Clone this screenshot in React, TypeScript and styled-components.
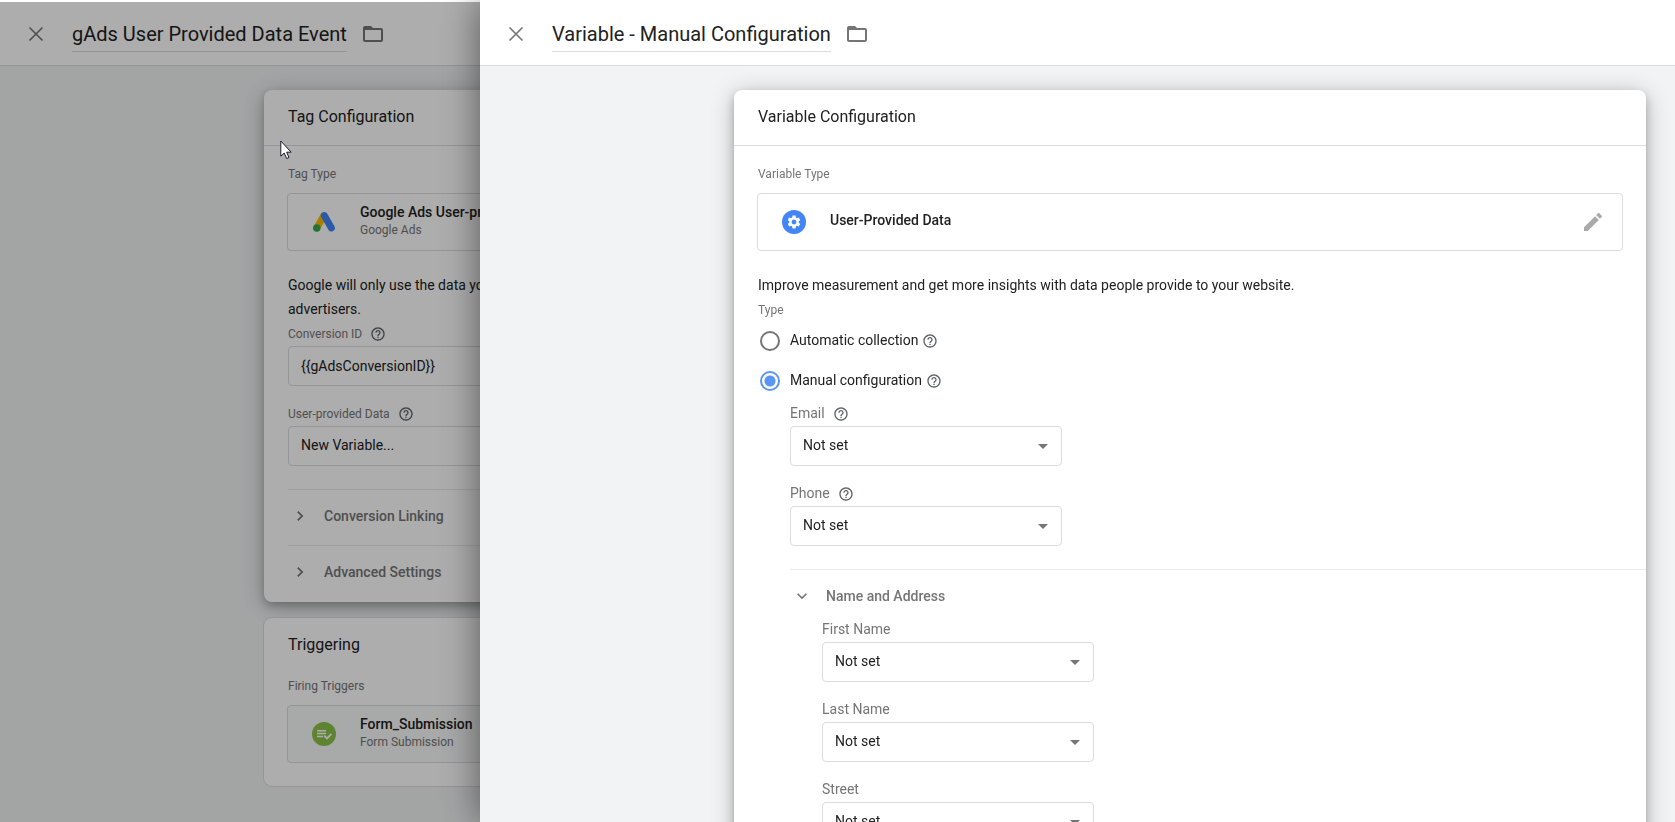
import React, { useId, useState } from 'react';
import styled, { createGlobalStyle } from 'styled-components';
import {
  MdArrowDropDown,
  MdChevronRight,
  MdEdit,
  MdExpandMore,
  MdHelpOutline,
  MdSettings,
} from 'react-icons/md';

const GlobalStyle = createGlobalStyle`
  * { box-sizing: border-box; }
  body {
    margin: 0;
    background: #fff;
    color: #212121;
    font-family: Roboto, "Liberation Sans", sans-serif;
    font-size: 14px;
    line-height: 24px;
  }
  h1, h2, h3, p { margin: 0; }
  button, input, select { font: inherit; color: inherit; }
  svg { display: block; flex: none; }
`;

const Screen = styled.div`
  height: 100vh;
  padding-top: 2px;
  overflow: hidden;
`;

const Sheet = styled.section`
  height: 100%;
  background: #f1f3f4;
  overflow: hidden;
`;

const Scrim = styled.div`
  position: fixed;
  inset: 2px 0 0;
  background: rgba(0, 0, 0, 0.32);
`;

const Drawer = styled(Sheet)`
  position: fixed;
  inset: 0 0 0 480px;
  height: auto;
  padding-top: 2px;
  background: linear-gradient(#fff 2px, #f1f3f4 2px);
  box-shadow: 0 0 36px rgba(0, 0, 0, 0.5);
`;

const SheetHeader = styled.header`
  display: flex;
  align-items: center;
  height: 64px;
  padding: 0 24px;
  background: #fff;
  border-bottom: 1px solid #dadce0;
`;

const SheetTitle = styled.h1`
  margin: 5px 14px 0 24px;
  padding-bottom: 3px;
  border-bottom: 1px solid #dadce0;
  font-size: 20px;
  font-weight: 400;
  line-height: 28px;
  white-space: nowrap;
`;

const IconButton = styled.button`
  display: flex;
  padding: 0;
  border: 0;
  background: none;
  color: #757575;
  cursor: pointer;
`;

const TagBody = styled.main`
  display: flex;
  flex-direction: column;
  gap: 16px;
  padding: 24px 264px;
`;

const VariableBody = styled.main`
  padding: 24px 29px 24px 254px;
`;

const Card = styled.section<{ $raised?: boolean }>`
  background: #fff;
  border-radius: 8px;
  box-shadow: ${(p) =>
    p.$raised
      ? '0 4px 8px rgba(0, 0, 0, 0.22), 0 4px 24px rgba(0, 0, 0, 0.24)'
      : '0 0 0 1px #dadce0'};
`;

const CardHeader = styled.header<{ $ruled?: boolean }>`
  height: ${(p) => (p.$ruled ? 56 : 52)}px;
  padding: 15px 24px 0;
  border-bottom: ${(p) => (p.$ruled ? '1px solid #dadce0' : '0')};
`;

const CardTitle = styled.h2`
  font-size: 16px;
  font-weight: 400;
  line-height: 24px;
`;

const CardContent = styled.div<{ $top: number; $bottom: number }>`
  padding: ${(p) => p.$top}px 24px ${(p) => p.$bottom}px;
`;

const Caption = styled.h3`
  height: 24px;
  padding-top: 1px;
  color: #757575;
  font-size: 12px;
  font-weight: 400;
  line-height: 24px;
`;

const TypeBox = styled.button<{ $shaded?: boolean }>`
  display: flex;
  align-items: center;
  gap: 24px;
  width: calc(100% + 2px);
  height: 58px;
  margin: 8px -1px 0;
  padding: 0 17px 0 24px;
  border: 1px solid #dadce0;
  border-radius: 4px;
  background: ${(p) => (p.$shaded ? '#f8f9fa' : '#fff')};
  text-align: left;
  cursor: pointer;
`;

const TypeText = styled.span`
  display: flex;
  flex: 1;
  flex-direction: column;
  padding-bottom: 2px;
`;

const TypeName = styled.span`
  font-weight: 500;
  line-height: 18px;

  &:only-child {
    padding-bottom: 2px;
  }
`;

const TypeSource = styled.span`
  color: #757575;
  font-size: 12px;
  line-height: 18px;
`;

const Description = styled.p`
  margin-top: 22px;
`;

const FieldBlock = styled.div`
  & + & { margin-top: 15px; }
`;

const FieldLabel = styled.div<{ $large?: boolean }>`
  display: flex;
  align-items: center;
  gap: 8px;
  height: 25px;
  color: #757575;
  font-size: ${(p) => (p.$large ? 14 : 12)}px;
  line-height: ${(p) => (p.$large ? 20 : 24)}px;

  & > label {
    padding-bottom: ${(p) => (p.$large ? 2 : 0)}px;
  }
`;

const HelpButton = styled(IconButton)`
  color: #5f6368;
`;

const TextInput = styled.input`
  display: block;
  width: 100%;
  height: 40px;
  padding: 0 12px;
  border: 1px solid #dadce0;
  border-radius: 4px;
  background: #fff;
`;

const SelectFrame = styled.div<{ $fluid?: boolean }>`
  display: grid;
  grid-template-columns: 1fr auto;
  align-items: center;
  width: ${(p) => (p.$fluid ? '100%' : '272px')};

  & > select {
    grid-area: 1 / 1 / 2 / 3;
    width: 100%;
    height: 40px;
    padding: 0 12px 2px;
    border: 1px solid #dadce0;
    border-radius: 4px;
    background: #fff;
    appearance: none;
  }

  & > svg {
    grid-area: 1 / 2;
    margin-right: 7px;
    color: #757575;
    pointer-events: none;
  }
`;

const ExpanderRow = styled.button<{ $height: number }>`
  display: flex;
  align-items: flex-start;
  gap: 14px;
  width: 100%;
  height: ${(p) => p.$height}px;
  padding: 16px 0 0 2px;
  border: 0;
  border-top: 1px solid #e8eaed;
  background: none;
  color: #757575;
  font-weight: 500;
  line-height: 20px;
  text-align: left;
  cursor: pointer;
`;

const ExpanderList = styled.div`
  margin-top: 23px;
`;

const RadioRow = styled.div`
  display: flex;
  align-items: center;
  height: 40px;
  padding-left: 2px;
`;

const RadioInput = styled.input`
  width: 20px;
  height: 20px;
  margin: 0;
  border: 2px solid #757575;
  border-radius: 50%;
  appearance: none;

  &:checked {
    border-color: #5a95f5;
    background: radial-gradient(circle, #5a95f5 5px, transparent 6px);
  }
`;

const RadioLabel = styled.label`
  margin: 0 4px 0 10px;
  padding-bottom: 2px;
  line-height: 22px;
`;

const Nested = styled.div`
  padding-left: 32px;
`;

const AddressSection = styled.div`
  margin: 23px -24px 0 0;
`;

const Pointer = styled.svg`
  position: fixed;
  top: 140px;
  left: 280px;
`;

function CloseIcon() {
  return (
    <svg width="24" height="24" viewBox="0 0 24 24" fill="none" stroke="currentColor" strokeWidth="1.6">
      <path d="M5.5 5.5l13 13M18.5 5.5l-13 13" />
    </svg>
  );
}

function FolderIcon() {
  return (
    <svg width="24" height="24" viewBox="0 0 24 24" fill="currentColor">
      <path d="M20 6h-8l-2-2H4c-1.1 0-1.99.9-1.99 2L2 18c0 1.1.9 2 2 2h16c1.1 0 2-.9 2-2V8c0-1.1-.9-2-2-2zm0 12H4V8h16v10z" />
    </svg>
  );
}

function AdsIcon() {
  return (
    <svg width="24" height="24" viewBox="0 0 24 24" fill="none" strokeLinecap="round" strokeWidth="7">
      <path d="M11.6 6 4.8 18" stroke="#fbbc04" />
      <path d="M12.3 5.6 19.4 17.9" stroke="#4285f4" />
      <circle cx="4.8" cy="18" r="3.7" fill="#34a853" />
    </svg>
  );
}

function FormIcon() {
  return (
    <svg width="24" height="24" viewBox="0 0 24 24" fill="none" stroke="#fff" strokeWidth="1.5">
      <circle cx="12" cy="12" r="12" fill="#8bc34a" stroke="none" />
      <path d="M5 8.7h9M5 11.6h9M5 14.5h6" />
      <path d="M12.2 13.6l2.8 2.8 4.4-4.6" strokeWidth="1.8" />
    </svg>
  );
}

function GearIcon() {
  return (
    <svg width="24" height="24" viewBox="0 0 24 24">
      <circle cx="12" cy="12" r="12" fill="#4285f4" />
      <MdSettings x="4" y="4" size={16} color="#fff" />
    </svg>
  );
}

function Help({ topic }: { topic: string }) {
  return (
    <HelpButton type="button" aria-label={`Help: ${topic}`}>
      <MdHelpOutline size={16} />
    </HelpButton>
  );
}

function Header({ title }: { title: string }) {
  return (
    <SheetHeader>
      <IconButton type="button" aria-label="Close">
        <CloseIcon />
      </IconButton>
      <SheetTitle>{title}</SheetTitle>
      <IconButton type="button" aria-label="Move to folder">
        <FolderIcon />
      </IconButton>
    </SheetHeader>
  );
}

type SelectFieldProps = {
  label: string;
  value?: string;
  help?: boolean;
  fluid?: boolean;
  large?: boolean;
};

function SelectField({ label, value = 'Not set', help, fluid, large }: SelectFieldProps) {
  const id = useId();
  return (
    <FieldBlock>
      <FieldLabel $large={large}>
        <label htmlFor={id}>{label}</label>
        {help && <Help topic={label} />}
      </FieldLabel>
      <SelectFrame $fluid={fluid}>
        <select id={id}>
          <option>{value}</option>
        </select>
        <MdArrowDropDown size={24} />
      </SelectFrame>
    </FieldBlock>
  );
}

function TagSheet() {
  return (
    <Sheet>
      <Header title="gAds User Provided Data Event" />
      <TagBody>
        <Card $raised>
          <CardHeader $ruled>
            <CardTitle>Tag Configuration</CardTitle>
          </CardHeader>
          <CardContent $top={15} $bottom={1}>
            <Caption>Tag Type</Caption>
            <TypeBox type="button">
              <AdsIcon />
              <TypeText>
                <TypeName>Google Ads User-provided Data Event</TypeName>
                <TypeSource>Google Ads</TypeSource>
              </TypeText>
            </TypeBox>
            <Description>
              Google will only use the data you
              <br />
              advertisers.
            </Description>
            <FieldBlock>
              <FieldLabel>
                <label htmlFor="conversion-id">Conversion ID</label>
                <Help topic="Conversion ID" />
              </FieldLabel>
              <TextInput id="conversion-id" defaultValue="{{gAdsConversionID}}" />
            </FieldBlock>
            <SelectField label="User-provided Data" value="New Variable..." help fluid />
            <ExpanderList>
              {['Conversion Linking', 'Advanced Settings'].map((name) => (
                <ExpanderRow key={name} type="button" $height={56}>
                  <MdChevronRight size={20} />
                  {name}
                </ExpanderRow>
              ))}
            </ExpanderList>
          </CardContent>
        </Card>
        <Card>
          <CardHeader>
            <CardTitle>Triggering</CardTitle>
          </CardHeader>
          <CardContent $top={3} $bottom={23}>
            <Caption>Firing Triggers</Caption>
            <TypeBox type="button" $shaded>
              <FormIcon />
              <TypeText>
                <TypeName>Form_Submission</TypeName>
                <TypeSource>Form Submission</TypeSource>
              </TypeText>
            </TypeBox>
          </CardContent>
        </Card>
      </TagBody>
    </Sheet>
  );
}

function VariableDrawer() {
  const [mode, setMode] = useState('manual');
  const modes = [
    { id: 'automatic', label: 'Automatic collection' },
    { id: 'manual', label: 'Manual configuration' },
  ];
  return (
    <Drawer>
      <Header title="Variable - Manual Configuration" />
      <VariableBody>
        <Card $raised>
          <CardHeader $ruled>
            <CardTitle>Variable Configuration</CardTitle>
          </CardHeader>
          <CardContent $top={15} $bottom={24}>
            <Caption>Variable Type</Caption>
            <TypeBox type="button">
              <GearIcon />
              <TypeText>
                <TypeName>User-Provided Data</TypeName>
              </TypeText>
              <MdEdit size={24} color="#aaa" />
            </TypeBox>
            <Description>
              Improve measurement and get more insights with data people provide to your website.
            </Description>
            <Caption>Type</Caption>
            {modes.map((m) => (
              <RadioRow key={m.id}>
                <RadioInput
                  type="radio"
                  name="collection"
                  id={m.id}
                  checked={mode === m.id}
                  onChange={() => setMode(m.id)}
                />
                <RadioLabel htmlFor={m.id}>{m.label}</RadioLabel>
                <Help topic={m.label} />
              </RadioRow>
            ))}
            <Nested>
              <SelectField label="Email" help large />
              <SelectField label="Phone" help large />
              <AddressSection>
                <ExpanderRow type="button" $height={48}>
                  <MdExpandMore size={20} />
                  Name and Address
                </ExpanderRow>
                <Nested>
                  <SelectField label="First Name" large />
                  <SelectField label="Last Name" large />
                  <SelectField label="Street" large />
                </Nested>
              </AddressSection>
            </Nested>
          </CardContent>
        </Card>
      </VariableBody>
    </Drawer>
  );
}

export default function App() {
  return (
    <Screen>
      <GlobalStyle />
      <TagSheet />
      <Scrim />
      <VariableDrawer />
      <Pointer width="13" height="21" viewBox="0 0 13 21" aria-hidden="true">
        <path
          d="M.8 1v15.2l3.4-3.2 2.4 5.5 2.4-1-2.4-5.3h4.6z"
          fill="#fff"
          stroke="#1a1a2e"
          strokeWidth="1"
        />
      </Pointer>
    </Screen>
  );
}
